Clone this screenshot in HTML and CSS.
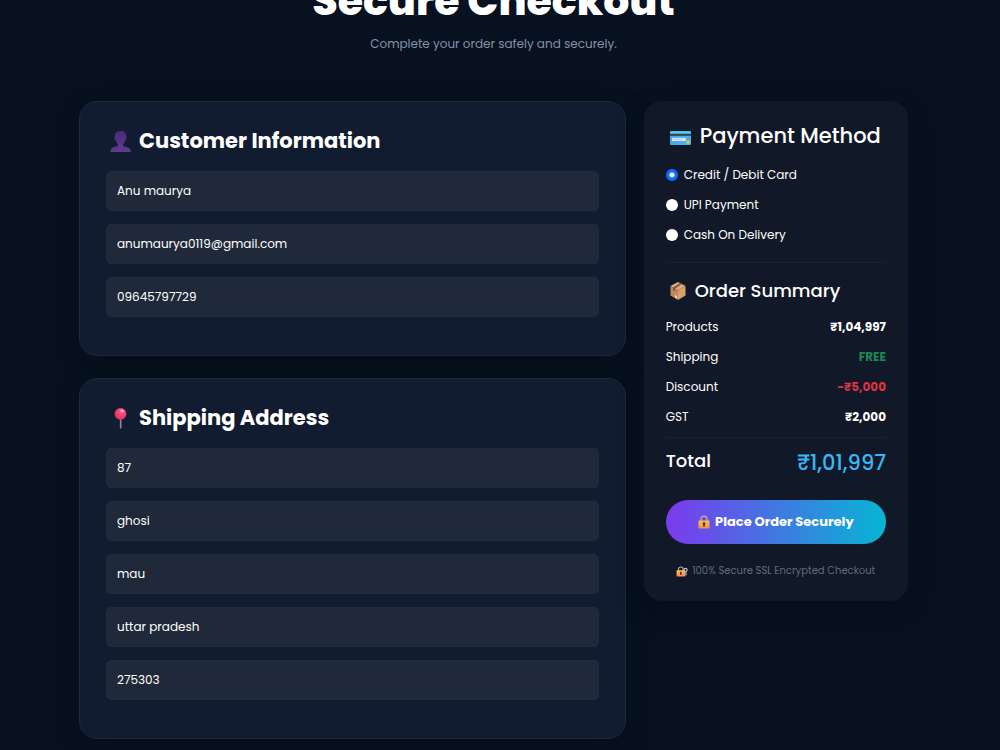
FILE: index.html
```html
<!DOCTYPE html>
<html lang="en">
<head>
    <meta charset="UTF-8">
    <meta name="viewport" content="width=device-width, initial-scale=1">
    <title>Secure Checkout</title>
    <link rel="stylesheet" href="styles.css">
</head>

<body>

<!-- shared padlock drawing -->
<svg class="defs" aria-hidden="true">
    <defs>
        <linearGradient id="gold" x1="0" y1="0" x2="0" y2="1">
            <stop offset="0" stop-color="#fbc343"/>
            <stop offset="1" stop-color="#f58a4b"/>
        </linearGradient>
        <symbol id="lock" viewBox="0 0 24 28">
            <path d="M6 14V8.500a6 6 0 0 1 12 0V14" fill="none" stroke="#b9a8a8" stroke-width="3"/>
            <rect x="1" y="11" width="22" height="16" rx="2" fill="url(#gold)"/>
            <circle cx="12" cy="17" r="2.500" fill="#4a2a35"/>
            <path d="M11 17h2l1 6h-4z" fill="#4a2a35"/>
        </symbol>
    </defs>
</svg>

<header class="page-header">
    <h1>Secure Checkout</h1>
    <p>Complete your order safely and securely.</p>
</header>

<form class="checkout">

    <div class="details">
        <section class="card">
            <h2>
                <svg class="icon" viewBox="0 0 32 32" aria-hidden="true">
                    <defs>
                        <linearGradient id="bust" x1="0" y1="0" x2="0" y2="1">
                            <stop offset="0" stop-color="#4a2a78"/>
                            <stop offset="1" stop-color="#613a94"/>
                        </linearGradient>
                    </defs>
                    <path fill="url(#bust)" d="M16 0c-5.500 0-8.500 2.500-8.500 8 0 1-1 1.500-.8 3 .2 1.500 1 2.500 2 3 .6 3 2 5 3.300 6v2.500c-1 1.500-7 1.500-9.500 4-1.500 1.500-2 3-2 5.500h31c0-2.500-.5-4-2-5.500-2.500-2.500-8.500-2.500-9.500-4V20c1.300-1 2.700-3 3.300-6 1-.5 1.800-1.500 2-3 .2-1.500-.8-2-.8-3C24.500 2.500 21.500 0 16 0z"/>
                </svg>
                Customer Information
            </h2>
            <input type="text" aria-label="Full name" value="Anu maurya">
            <input type="email" aria-label="Email" value="anumaurya0119@gmail.com">
            <input type="tel" aria-label="Phone" value="09645797729">
        </section>

        <section class="card">
            <h2>
                <svg class="icon" viewBox="0 0 32 32" aria-hidden="true">
                    <defs>
                        <radialGradient id="pin" cx=".6" cy=".3" r=".7">
                            <stop offset="0" stop-color="#ff5a8c"/>
                            <stop offset="1" stop-color="#e62a5e"/>
                        </radialGradient>
                    </defs>
                    <path d="M15 16h2.500v14l-1.200 2-1.300-2z" fill="#8d87a0"/>
                    <circle cx="16" cy="9" r="9" fill="url(#pin)"/>
                    <ellipse cx="18.500" cy="4.500" rx="2.500" ry="2" fill="#ffc0d3"/>
                </svg>
                Shipping Address
            </h2>
            <input type="text" aria-label="House number" value="87">
            <input type="text" aria-label="Area" value="ghosi">
            <input type="text" aria-label="City" value="mau">
            <input type="text" aria-label="State" value="uttar pradesh">
            <input type="text" aria-label="PIN code" value="275303">
        </section>
    </div>

    <aside class="summary">
        <h3 class="payment-title">
            <svg class="icon" viewBox="0 0 32 32" aria-hidden="true">
                <defs>
                    <linearGradient id="card" x1="0" y1="0" x2="1" y2="1">
                        <stop offset="0" stop-color="#3da2e0"/>
                        <stop offset="1" stop-color="#45b8ed"/>
                    </linearGradient>
                </defs>
                <rect x="0" y="8" width="32" height="21" rx="2" fill="url(#card)"/>
                <path d="M2 8h28a2 2 0 0 1 2 2v1H0v-1a2 2 0 0 1 2-2z" fill="#56d3e4"/>
                <rect y="12" width="32" height="3" fill="#35405a"/>
                <rect x="3" y="18" width="21" height="5" fill="#dce5eb"/>
                <path d="M5 20.500h14" fill="none" stroke="#b4bec8"/>
                <rect x="25" y="22" width="5" height="5" rx="1" fill="#efc23e"/>
            </svg>
            Payment Method
        </h3>
        <label><input type="radio" name="payment" checked> Credit / Debit Card</label>
        <label><input type="radio" name="payment"> UPI Payment</label>
        <label><input type="radio" name="payment"> Cash On Delivery</label>

        <hr>

        <h4 class="order-title">
            <svg class="icon" viewBox="0 0 32 36" aria-hidden="true">
                <path d="M16 0l15 8-15 9L1 8z" fill="#e0ab7c"/>
                <path d="M1 8l15 9v19L1 27z" fill="#c48758"/>
                <path d="M31 8l-15 9v19l15-9z" fill="#dba06e"/>
                <path d="M20 2l4 2L10 13.500v5l-4-2.500v-5z" fill="#87583f"/>
                <path d="M10 26l4 2v5l-4-2z" fill="#f1d5dc"/>
            </svg>
            Order Summary
        </h4>
        <div class="row"><span>Products</span><strong>₹1,04,997</strong></div>
        <div class="row"><span>Shipping</span><strong class="free">FREE</strong></div>
        <div class="row"><span>Discount</span><strong class="discount">-₹5,000</strong></div>
        <div class="row"><span>GST</span><strong>₹2,000</strong></div>

        <hr>

        <div class="total"><span>Total</span><span class="amount">₹1,01,997</span></div>

        <button type="submit">
            <svg class="lock" aria-hidden="true"><use href="#lock"/></svg>
            Place Order Securely
        </button>

        <p class="note">
            <svg class="lock-key" viewBox="0 0 30 28" aria-hidden="true">
                <circle cx="24" cy="10" r="4" fill="none" stroke="#c9bfd6" stroke-width="3"/>
                <path d="M25 14v10" stroke="#c9bfd6" stroke-width="3"/>
                <use href="#lock" width="24" height="28"/>
            </svg>
            100% Secure SSL Encrypted Checkout
        </p>
    </aside>

</form>

</body>
</html>
```
FILE: styles.css
```css
* {
    box-sizing: border-box;
}
body {
    margin:     0;
    padding:    0 92px 11px 79px;
    font-family: Poppins, Inter, "Noto Sans", sans-serif;
    font-size:  12px;
    line-height: 20px;
    color:      white;
    background: #07111f;
}
h1, h2, h3, h4, p {
    margin:     0;
}
.defs {
    position:   absolute;
    width:      0;
    height:     0;
}

.page-header {
    margin:     -23px 0 47px;
    text-align: center;
}
.page-header h1 {
    margin-bottom: 9px;
    font-size:  41px;
    font-weight: 800;
    line-height: 48px;
}
.page-header p {
    color:      #8391a7;
}

.checkout {
    display:    grid;
    grid-template-columns: repeat(3, minmax(0, 1fr));
    gap:        18px;
    align-items: start;
}
.details {
    grid-column: span 2;
    display:    grid;
    gap:        22px;
}

.card {
    padding:    26px 26px 25px;
    border:     1px solid #1d293b;
    border-radius: 18px;
    background: #111c30;
    box-shadow: 0 8px 30px rgba(0, 0, 0, 0.2);
}
.card h2 {
    display:    flex;
    align-items: center;
    gap:        8px;
    margin-bottom: 17px;
    padding-left: 4px;
    font-size:  21px;
    font-weight: 700;
    line-height: 26px;
}
.icon {
    width:      21px;
    height:     21px;
    flex:       none;
}
.card input {
    display:    block;
    width:      100%;
    height:     40px;
    margin-bottom: 13px;
    padding:    0 10px;
    border:     1px solid #202b3c;
    border-radius: 5px;
    font:       inherit;
    color:      white;
    background: #1f293a;
}

.summary {
    padding:    22px;
    border-radius: 18px;
    background: #111827;
    box-shadow: 0 8px 30px rgba(0, 0, 0, 0.2);
}
.summary h3,
.summary h4 {
    display:    flex;
    align-items: center;
    gap:        9px;
    padding-left: 4px;
    font-weight: 500;
    line-height: 26px;
    white-space: nowrap;
}
.payment-title {
    margin-bottom: 16px;
    font-size:  21px;
}
.order-title {
    margin-bottom: 13px;
    font-size:  18px;
}
.order-title .icon {
    width:      16px;
    height:     18px;
}
.summary label {
    display:    flex;
    align-items: center;
    gap:        6px;
    margin-bottom: 10px;
}
.summary input {
    appearance: none;
    width:      12px;
    height:     12px;
    margin:     0;
    border-radius: 50%;
    background: white;
}
.summary input:checked {
    background: radial-gradient(circle, white 2px, #0d6efd 3px);
}
.summary hr {
    margin:     0 0 15px;
    border:     0;
    border-top: 1px solid #1a212f;
}
.summary label + hr {
    margin-top: 17px;
}
.summary .row + hr {
    margin-bottom: 12px;
}

.row,
.total {
    display:    flex;
    justify-content: space-between;
}
.row {
    margin-bottom: 10px;
}
.row strong {
    font-weight: 700;
}
.row .free {
    color:      #198754;
}
.row .discount {
    color:      #dc3545;
}
.total {
    margin-bottom: 24px;
    font-size:  18px;
    font-weight: 500;
    line-height: 22px;
}
.total .amount {
    font-size:  21px;
    line-height: 26px;
    color:      #38b6f5;
}

.summary button {
    display:    flex;
    align-items: center;
    justify-content: center;
    gap:        5px;
    width:      100%;
    height:     44px;
    border:     0;
    border-radius: 22px;
    font:       inherit;
    font-size:  13px;
    font-weight: 700;
    color:      white;
    background: linear-gradient(90deg, #7c3aed, #06b6d4);
}
.lock {
    width:      12px;
    height:     14px;
}
.note {
    display:    flex;
    align-items: center;
    justify-content: center;
    gap:        4px;
    margin-top: 19px;
    font-size:  10px;
    line-height: 16px;
    white-space: nowrap;
    color:      #646a75;
}
.lock-key {
    width:      12px;
    height:     11px;
}
```
